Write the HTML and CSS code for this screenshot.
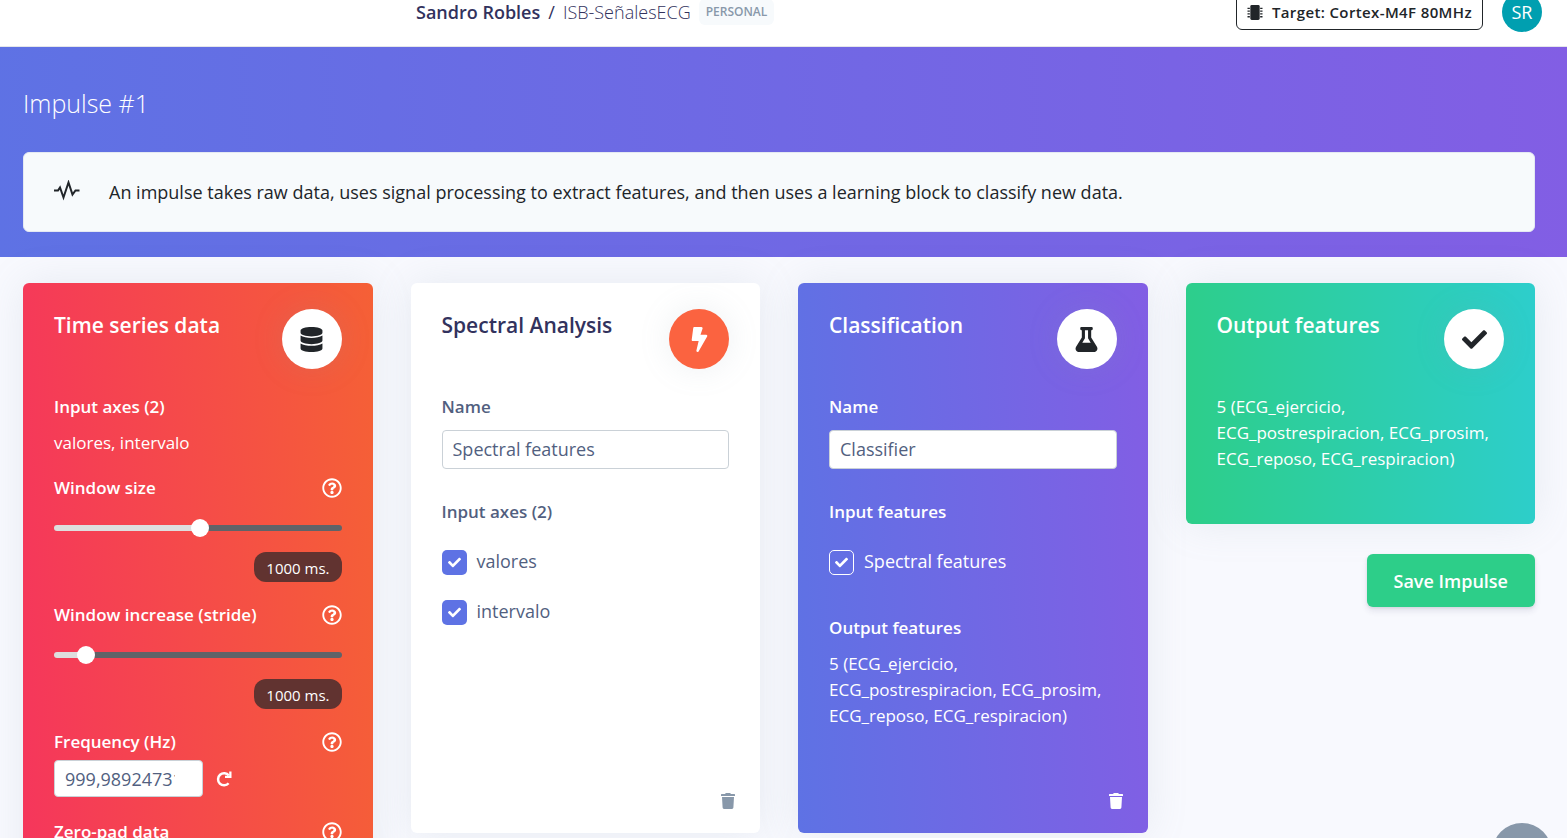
FILE: index.html
```html
<!DOCTYPE html>
<html lang="en">
<head>
<meta charset="utf-8">
<title>Impulse #1</title>
<link rel="stylesheet" href="styles.css">
</head>
<body>
<svg class="sprite" aria-hidden="true">
  <symbol id="help" viewBox="0 0 512 512"><path d="M256 8C119.043 8 8 119.083 8 256c0 136.997 111.043 248 248 248s248-111.003 248-248C504 119.083 392.957 8 256 8zm0 448c-110.532 0-200-89.431-200-200 0-110.495 89.472-200 200-200 110.491 0 200 89.471 200 200 0 110.530-89.431 200-200 200zm107.244-255.200c0 67.052-72.421 68.084-72.421 92.863V300c0 6.627-5.373 12-12 12h-45.647c-6.627 0-12-5.373-12-12v-8.659c0-35.745 27.100-50.034 47.579-61.516 17.561-9.845 28.324-16.541 28.324-29.579 0-17.246-21.999-28.693-39.784-28.693-23.189 0-33.894 10.977-48.942 29.969-4.057 5.120-11.460 6.071-16.666 2.124l-27.824-21.098c-5.107-3.872-6.251-11.066-2.644-16.363C184.846 131.491 214.940 112 261.794 112c49.071 0 101.450 38.304 101.450 88.800zM298 368c0 23.159-18.841 42-42 42s-42-18.841-42-42 18.841-42 42-42 42 18.841 42 42z"/></symbol>
  <symbol id="trash" viewBox="0 0 14 16"><path d="M0 1.600Q0 1 .6 1H4L4.600.3Q4.800 0 5.200 0H8.800Q9.200 0 9.400.3L10 1H13.400Q14 1 14 1.600V3H0ZM1 4H13L12.400 14.600Q12.300 16 11 16H3Q1.700 16 1.600 14.600Z"/></symbol>
  <symbol id="check" viewBox="0 0 512 512"><path d="M173.898 439.404l-166.400-166.400c-9.997-9.997-9.997-26.206 0-36.204l36.203-36.204c9.997-9.998 26.207-9.998 36.204 0L192 312.690 432.095 72.596c9.997-9.997 26.207-9.997 36.204 0l36.203 36.204c9.997 9.997 9.997 26.206 0 36.204l-294.400 294.401c-9.998 9.997-26.207 9.997-36.204-.001z"/></symbol>
</svg>

<header class="topbar">
  <nav class="crumbs" aria-label="Breadcrumb">
    <a class="crumb-owner" href="#">Sandro Robles</a>
    <span class="crumb-sep">/</span>
    <a class="crumb-project" href="#">ISB-SeñalesECG</a>
    <span class="tag">PERSONAL</span>
  </nav>
  <div class="account">
    <button class="target" type="button">
      <svg class="chip" viewBox="0 0 16 16" aria-hidden="true"><rect x="3" width="10" height="16" rx="1.500"/><path d="M0 3.500h2.500M0 6.500h2.500M0 9.500h2.500M0 12.500h2.500M13.500 3.500H16M13.500 6.500H16M13.500 9.500H16M13.500 12.500H16" stroke="currentColor" stroke-width="1.400"/></svg>
      Target: Cortex-M4F 80MHz
    </button>
    <a class="avatar" href="#">SR</a>
  </div>
</header>

<section class="hero">
  <h1 class="hero-title">Impulse #1</h1>
  <div class="notice">
    <svg class="pulse" viewBox="0 0 26 24" aria-hidden="true"><path d="M0 10.500H4L6 7.500 9.500 17.500 14.500 2.500 18.500 14.500 21.500 10.500H25.500" fill="none" stroke="currentColor" stroke-width="2"/></svg>
    <p class="notice-text">An impulse takes raw data, uses signal processing to extract features, and then uses a learning block to classify new data.</p>
  </div>
</section>

<main class="blocks">
  <section class="card card-red">
    <div class="card-head">
      <h2 class="card-title">Time series data</h2>
      <span class="badge"><svg class="badge-icon" viewBox="0 0 448 512" aria-hidden="true"><path d="M448 73.143v45.714C448 159.143 347.667 192 224 192S0 159.143 0 118.857V73.143C0 32.857 100.333 0 224 0s224 32.857 224 73.143zM448 176v102.857C448 319.143 347.667 352 224 352S0 319.143 0 278.857V176c48.125 33.143 136.208 48.572 224 48.572S399.874 209.143 448 176zm0 160v102.857C448 479.143 347.667 512 224 512S0 479.143 0 438.857V336c48.125 33.143 136.208 48.572 224 48.572S399.874 369.143 448 336z"/></svg></span>
    </div>
    <p class="label">Input axes (2)</p>
    <p class="copy axes">valores, intervalo</p>
    <div class="setting">
      <div class="setting-head"><label class="label" for="size">Window size</label><svg class="help"><use href="#help"/></svg></div>
      <input class="slider" id="size" type="range" min="0" max="100" step="any" value="51" style="--fill:51%">
      <output class="value" for="size">1000 ms.</output>
    </div>
    <div class="setting">
      <div class="setting-head"><label class="label" for="stride">Window increase (stride)</label><svg class="help"><use href="#help"/></svg></div>
      <input class="slider" id="stride" type="range" min="0" max="100" step="any" value="8.500" style="--fill:11%">
      <output class="value" for="stride">1000 ms.</output>
    </div>
    <div class="setting-head"><label class="label" for="freq">Frequency (Hz)</label><svg class="help"><use href="#help"/></svg></div>
    <div class="frequency">
      <input class="field field-freq" id="freq" type="text" inputmode="decimal" value="999,9892473118279">
      <button class="icon-button" type="button" aria-label="Reset frequency"><svg class="redo" viewBox="0 0 16 16" aria-hidden="true"><path d="M12.800 4.600A6 6 0 1 0 12.600 12.200" fill="none" stroke="currentColor" stroke-width="2.500"/><path d="M13.200.5H15.500V7H9V4.800H13.200Z"/></svg></button>
    </div>
    <div class="setting-head zero"><label class="label" for="pad">Zero-pad data</label><svg class="help"><use href="#help"/></svg></div>
    <span class="tick tick-outline"><input class="tick-input" id="pad" type="checkbox" checked><svg class="tick-mark"><use href="#check"/></svg></span>
  </section>

  <section class="card card-white card-tall">
    <div class="card-head">
      <h2 class="card-title">Spectral Analysis</h2>
      <span class="badge badge-orange"><svg class="badge-icon" viewBox="0 0 320 512" aria-hidden="true"><path d="M296 160H180.600l42.600-129.800C227.200 15 215.700 0 200 0H56C44 0 33.800 8.900 32.200 20.800l-32 240C-1.700 275.200 9.500 288 24 288h118.700L96.600 482.500c-3.600 15.200 8 29.500 23.300 29.500 8.400 0 16.400-4.400 20.800-12l176-304c9.300-15.900-2.200-36-20.700-36z"/></svg></span>
    </div>
    <label class="label" for="dsp-name">Name</label>
    <input class="field" id="dsp-name" type="text" value="Spectral features">
    <p class="label group">Input axes (2)</p>
    <label class="option"><span class="tick"><input class="tick-input" type="checkbox" checked><svg class="tick-mark"><use href="#check"/></svg></span><span class="option-text">valores</span></label>
    <label class="option"><span class="tick"><input class="tick-input" type="checkbox" checked><svg class="tick-mark"><use href="#check"/></svg></span><span class="option-text">intervalo</span></label>
    <button class="icon-button remove" type="button" aria-label="Delete block"><svg class="trash"><use href="#trash"/></svg></button>
  </section>

  <section class="card card-purple card-tall">
    <div class="card-head">
      <h2 class="card-title">Classification</h2>
      <span class="badge"><svg class="badge-icon" viewBox="0 0 448 512" aria-hidden="true"><path d="M437.200 403.500L320 215V64h8c13.300 0 24-10.700 24-24V24c0-13.300-10.700-24-24-24H120c-13.300 0-24 10.700-24 24v16c0 13.300 10.700 24 24 24h8v151L10.800 403.500C-18.500 450.600 15.300 512 70.900 512h306.200c55.700 0 89.400-61.500 60.100-108.500zM137.900 320l48.200-77.600c3.700-5.200 5.800-11.600 5.800-18.400V64h64v160c0 6.900 2.200 13.200 5.800 18.400l48.200 77.600h-172z"/></svg></span>
    </div>
    <label class="label" for="nn-name">Name</label>
    <input class="field" id="nn-name" type="text" value="Classifier">
    <p class="label group">Input features</p>
    <label class="option"><span class="tick tick-outline"><input class="tick-input" type="checkbox" checked><svg class="tick-mark"><use href="#check"/></svg></span><span class="option-text">Spectral features</span></label>
    <p class="label outputs">Output features</p>
    <p class="copy">5 (ECG_ejercicio, ECG_postrespiracion, ECG_prosim, ECG_reposo, ECG_respiracion)</p>
    <button class="icon-button remove" type="button" aria-label="Delete block"><svg class="trash"><use href="#trash"/></svg></button>
  </section>

  <div class="result">
    <section class="card card-green">
      <div class="card-head">
        <h2 class="card-title">Output features</h2>
        <span class="badge"><svg class="badge-icon"><use href="#check"/></svg></span>
      </div>
      <p class="copy">5 (ECG_ejercicio, ECG_postrespiracion, ECG_prosim, ECG_reposo, ECG_respiracion)</p>
    </section>
    <button class="save" type="button">Save Impulse</button>
  </div>
</main>
<button class="chat" type="button" aria-label="Open chat"></button>
</body>
</html>
```
FILE: styles.css
```css
* { box-sizing: border-box; }
html { overflow: hidden; }
body {
  margin: 0;
  height: 100vh;
  overflow: hidden;
  background: #f8f9fe;
  color: #525f7f;
  font: 400 18px/26px "Open Sans", "Noto Sans", sans-serif;
}
h1, h2, p { margin: 0; }
a { color: inherit; text-decoration: none; }
button { font: inherit; cursor: pointer; }
svg { fill: currentColor; }
.sprite { position: absolute; width: 0; height: 0; }

/* Top bar, with its upper edge scrolled out of view */
.topbar {
  display: flex;
  align-items: center;
  justify-content: space-between;
  height: 69px;
  margin-top: -22px;
  padding: 0 25px 0 416px;
  background: #fff;
  border-bottom: 1px solid #e4e6ea;
  color: #32325d;
}
.crumbs { display: flex; align-items: center; gap: 8px; }
.crumb-owner { font-weight: 600; }
.crumb-project { font-weight: 300; }
.tag {
  padding: 0 7px;
  border-radius: 6px;
  background: #f7fafc;
  color: #8898aa;
  font-size: 12px;
  font-weight: 600;
}
.account { display: flex; align-items: center; gap: 19px; }
.target {
  display: flex;
  align-items: center;
  gap: 9px;
  padding: 4px 10px;
  border: 1px solid #212529;
  border-radius: 6px;
  background: #fff;
  color: #212529;
  font-size: 15px;
  font-weight: 600;
  letter-spacing: 0.025em;
}
.chip { width: 16px; height: 15px; }
.avatar {
  display: grid;
  place-items: center;
  width: 40px;
  height: 40px;
  border-radius: 50%;
  background: #009fb0;
  color: #fff;
}

/* Banner */
.hero {
  padding: 39px 32px 25px 23px;
  background: linear-gradient(87deg, #5e72e4, #825ee4);
}
.hero-title {
  margin-bottom: 32px;
  color: #fff;
  font-size: 25px;
  font-weight: 300;
  line-height: 34px;
}
.notice {
  display: flex;
  align-items: center;
  gap: 29px;
  padding: 26px 30px;
  border: 1px solid #e4e9f2;
  border-radius: 6px;
  background: #f7fafc;
  color: #212529;
}
.pulse { width: 26px; height: 24px; }

/* Block cards */
.blocks {
  display: grid;
  grid-template-columns: repeat(4, minmax(0, 1fr));
  align-items: start;
  gap: 38px;
  padding: 26px 32px 26px 23px;
}
.card {
  display: flex;
  flex-direction: column;
  align-items: stretch;
  padding: 26px 31px;
  border-radius: 6px;
  box-shadow: 0 0 40px rgba(136, 152, 170, 0.15);
  color: #fff;
}
.card-red { background: linear-gradient(87deg, #f5365c, #f56036); }
.card-white { background: #fff; color: #525f7f; }
.card-purple { background: linear-gradient(87deg, #5e72e4, #825ee4); }
.card-green { min-height: 241px; background: linear-gradient(87deg, #2dce89, #2dcecc); }
.card-tall { min-height: 550px; padding-bottom: 24px; }
.card-head {
  display: flex;
  align-items: flex-start;
  justify-content: space-between;
  margin-bottom: 25px;
}
.card-title { font-size: 21px; font-weight: 600; line-height: 32px; }
.card-white .card-title { color: #32325d; }
.badge {
  display: grid;
  flex: none;
  place-items: center;
  width: 60px;
  height: 60px;
  border-radius: 50%;
  background: #fff;
  box-shadow: 0 0 32px rgba(136, 152, 170, 0.15);
  color: #212529;
}
.badge-orange { background: #fb6340; color: #fff; }
.badge-icon { width: 25px; height: 25px; }
.label { font-weight: 600; font-size: 17px; }
.copy { font-size: 17px; }
.axes { margin: 10px 0 19px; }
.setting { display: flex; flex-direction: column; margin-bottom: 20px; }
.setting-head { display: flex; align-items: center; justify-content: space-between; }
.help { width: 20px; height: 20px; }

.slider {
  appearance: none;
  width: 100%;
  height: 18px;
  margin: 18px 0 15px;
  background: none;
}
.slider::-webkit-slider-runnable-track {
  height: 6px;
  border-radius: 3px;
  background: linear-gradient(90deg, #dedede var(--fill), #5f6368 var(--fill));
}
.slider::-webkit-slider-thumb {
  appearance: none;
  width: 18px;
  height: 18px;
  margin-top: -6px;
  border-radius: 50%;
  background: #fff;
}
.value {
  align-self: flex-end;
  padding: 3px 12px 1px;
  border-radius: 12px;
  background: #613330;
  color: #fff;
  font-size: 15px;
}
.frequency { display: flex; align-items: center; gap: 13px; margin: 5px 0 22px; }
.field {
  width: 100%;
  margin-top: 10px;
  padding: 5px 10px;
  border: 1px solid #cad1d7;
  border-radius: 4px;
  background: #fff;
  color: #525f7f;
  font: inherit;
  line-height: 27px;
}
.field-freq { width: 149px; height: 37px; margin-top: 0; padding-right: 27px; }
.icon-button { padding: 0; border: 0; background: none; color: inherit; line-height: 0; }
.redo { width: 16px; height: 16px; }

.group { margin: 30px 0 24px; }
.option { display: flex; align-items: center; gap: 10px; margin-bottom: 23px; }
.option-text { padding-bottom: 1px; line-height: 24px; margin-bottom: 2px; }
.tick {
  display: grid;
  place-items: center;
  flex: none;
  width: 25px;
  height: 25px;
}
.tick-input {
  appearance: none;
  grid-area: 1 / 1;
  width: 25px;
  height: 25px;
  margin: 0;
  border-radius: 5px;
  background: #5e72e4;
}
.tick-outline .tick-input { border: 1px solid #fff; background: transparent; }
.tick-mark { grid-area: 1 / 1; z-index: 1; width: 13px; height: 13px; color: #fff; pointer-events: none; }
.outputs { margin: 16px 0 10px; }
.remove { align-self: flex-end; margin: auto -6px 0 0; color: #8898aa; }
.card-purple .remove { color: #fff; }
.trash { width: 14px; height: 16px; }

.result { display: flex; flex-direction: column; gap: 30px; }
.save {
  align-self: flex-end;
  padding: 14px 27px 13px;
  border: 0;
  border-radius: 6px;
  background: #2dce89;
  box-shadow: 0 4px 6px rgba(50, 50, 93, 0.11), 0 1px 3px rgba(0, 0, 0, 0.08);
  color: #fff;
  font-weight: 600;
}
.chat {
  position: fixed;
  right: 15px;
  bottom: -45px;
  width: 60px;
  height: 60px;
  border: 0;
  border-radius: 50%;
  background: #8898aa;
}
```
